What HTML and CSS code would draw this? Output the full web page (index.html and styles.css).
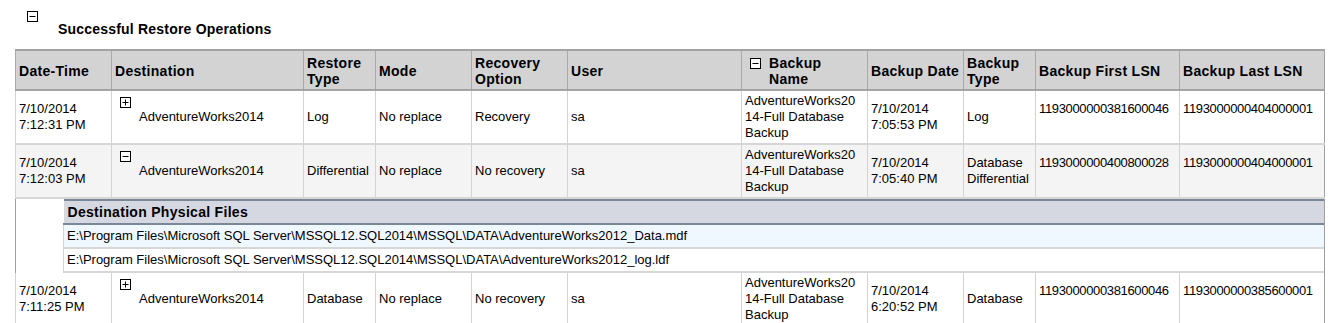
FILE: index.html
```html
<!DOCTYPE html>
<html>
<head>
<meta charset="utf-8">
<link rel="stylesheet" href="styles.css">
</head>
<body>
<div class="section-head">
  <svg class="tog" width="11" height="11" viewBox="0 0 11 11"><rect x="0.5" y="0.5" width="10" height="10" fill="#fff" stroke="#000"/><line x1="2.5" y1="5.5" x2="8.5" y2="5.5" stroke="#000"/></svg>
  <div class="title">Successful Restore Operations</div>
</div>
<table class="grid">
  <colgroup>
    <col class="c96"><col class="c192"><col class="c72"><col class="c96"><col class="c96"><col class="c174"><col class="c126"><col class="c96"><col class="c72"><col class="c144"><col class="c145">
  </colgroup>
  <thead>
    <tr>
      <th>Date-Time</th>
      <th>Destination</th>
      <th>Restore<br>Type</th>
      <th>Mode</th>
      <th>Recovery<br>Option</th>
      <th>User</th>
      <th><div class="th-tog"><svg class="tog" width="11" height="11" viewBox="0 0 11 11"><rect x="0.5" y="0.5" width="10" height="10" fill="#fff" stroke="#000"/><line x1="2.5" y1="5.5" x2="8.5" y2="5.5" stroke="#000"/></svg><span>Backup<br>Name</span></div></th>
      <th>Backup Date</th>
      <th>Backup<br>Type</th>
      <th>Backup First LSN</th>
      <th>Backup Last LSN</th>
    </tr>
  </thead>
  <tbody>
    <tr class="row">
      <td>7/10/2014<br>7:12:31 PM</td>
      <td class="dest"><svg class="tog dtog" width="11" height="11" viewBox="0 0 11 11"><rect x="0.5" y="0.5" width="10" height="10" fill="#fff" stroke="#000"/><line x1="2.5" y1="5.5" x2="8.5" y2="5.5" stroke="#000"/><line x1="5.5" y1="2.5" x2="5.5" y2="8.5" stroke="#000"/></svg>AdventureWorks2014</td>
      <td>Log</td>
      <td>No replace</td>
      <td>Recovery</td>
      <td>sa</td>
      <td>AdventureWorks20<br>14-Full Database<br>Backup</td>
      <td>7/10/2014<br>7:05:53 PM</td>
      <td>Log</td>
      <td class="lsn">1193000000381600046</td>
      <td class="lsn">1193000000404000001</td>
    </tr>
    <tr class="row alt">
      <td>7/10/2014<br>7:12:03 PM</td>
      <td class="dest"><svg class="tog dtog" width="11" height="11" viewBox="0 0 11 11"><rect x="0.5" y="0.5" width="10" height="10" fill="#fff" stroke="#000"/><line x1="2.5" y1="5.5" x2="8.5" y2="5.5" stroke="#000"/></svg>AdventureWorks2014</td>
      <td>Differential</td>
      <td>No replace</td>
      <td>No recovery</td>
      <td>sa</td>
      <td>AdventureWorks20<br>14-Full Database<br>Backup</td>
      <td>7/10/2014<br>7:05:40 PM</td>
      <td>Database<br>Differential</td>
      <td class="lsn">1193000000400800028</td>
      <td class="lsn">1193000000404000001</td>
    </tr>
    <tr class="detail">
      <td colspan="11">
        <table class="files">
          <thead>
            <tr><th>Destination Physical Files</th></tr>
          </thead>
          <tbody>
            <tr class="f1"><td>E:\Program Files\Microsoft SQL Server\MSSQL12.SQL2014\MSSQL\DATA\AdventureWorks2012_Data.mdf</td></tr>
            <tr class="f2"><td>E:\Program Files\Microsoft SQL Server\MSSQL12.SQL2014\MSSQL\DATA\AdventureWorks2012_log.ldf</td></tr>
          </tbody>
        </table>
      </td>
    </tr>
    <tr class="row">
      <td>7/10/2014<br>7:11:25 PM</td>
      <td class="dest"><svg class="tog dtog" width="11" height="11" viewBox="0 0 11 11"><rect x="0.5" y="0.5" width="10" height="10" fill="#fff" stroke="#000"/><line x1="2.5" y1="5.5" x2="8.5" y2="5.5" stroke="#000"/><line x1="5.5" y1="2.5" x2="5.5" y2="8.5" stroke="#000"/></svg>AdventureWorks2014</td>
      <td>Database</td>
      <td>No replace</td>
      <td>No recovery</td>
      <td>sa</td>
      <td>AdventureWorks20<br>14-Full Database<br>Backup</td>
      <td>7/10/2014<br>6:20:52 PM</td>
      <td>Database</td>
      <td class="lsn">1193000000381600046</td>
      <td class="lsn">1193000000385600001</td>
    </tr>
  </tbody>
</table>
</body>
</html>
```
FILE: styles.css
```css
html, body {
  margin: 0;
  padding: 0;
  background: #fff;
}
body {
  font-family: "Liberation Sans", Arial, sans-serif;
  font-size: 13px;
  line-height: 16px;
  color: #000;
}
.tog {
  display: block;
  flex: none;
}
.section-head {
  display: flex;
  flex-direction: column;
  padding: 11px 0 0 27px;
  height: 38px;
  box-sizing: border-box;
}
.title {
  font-weight: bold;
  font-size: 14px;
  letter-spacing: 0.2px;
  padding: 0 0 0 31px;
  margin-top: -1px;
}
.grid {
  margin-left: 15px;
  margin-top: 11px;
  border-collapse: collapse;
  table-layout: fixed;
  width: 1309px;
  border-left: 1px solid #a0a0a0;
  border-right: 1px solid #a0a0a0;
}
.c96 { width: 96px; }
.c192 { width: 192px; }
.c72 { width: 72px; }
.c174 { width: 174px; }
.c126 { width: 126px; }
.c144 { width: 144px; }
.c145 { width: 145px; }
.grid > thead th {
  background: #d3d3d3;
  border-top: 2px solid #a3a3a3;
  border-bottom: 2px solid #a3a3a3;
  border-left: 1px solid #a9a9a9;
  text-align: left;
  vertical-align: middle;
  font-weight: bold;
  font-size: 14px;
  letter-spacing: 0.3px;
  padding: 3px 3px 2px 3px;
  height: 33px;
}
.th-tog {
  display: flex;
  align-items: flex-start;
  gap: 8px;
  padding-left: 5px;
}
.th-tog .tog {
  margin-top: 3px;
}
.row > td {
  vertical-align: middle;
  padding: 2px 3px;
  border-bottom: 2px solid #d6d6d6;
  border-left: 1px solid #d3d3d3;
}
.row > td.lsn {
  padding-bottom: 18px;
  letter-spacing: -0.35px;
}
.alt > td {
  background: #f4f4f4;
}
.row > td.dest {
  position: relative;
  padding-left: 27px;
}
.dtog {
  position: absolute;
  left: 8px;
  top: 6px;
}
.detail > td {
  padding: 0 0 0 47px;
  border: none;
}
.files {
  width: 100%;
  border-collapse: collapse;
}
.files th {
  background: #d5d8e0;
  border-top: 2px solid #7a8796;
  border-bottom: 2px solid #7a8796;
  text-align: left;
  font-weight: bold;
  font-size: 14px;
  letter-spacing: 0.3px;
  padding: 3px 3px 3px 4px;
  height: 16px;
}
.files td {
  padding: 3px 3px 3px 3px;
  height: 16px;
  border-bottom: 2px solid #d6d6d6;
  border-left: 1px solid #d3d3d3;
}
.files .f1 td {
  background: #f0f8ff;
}
```
